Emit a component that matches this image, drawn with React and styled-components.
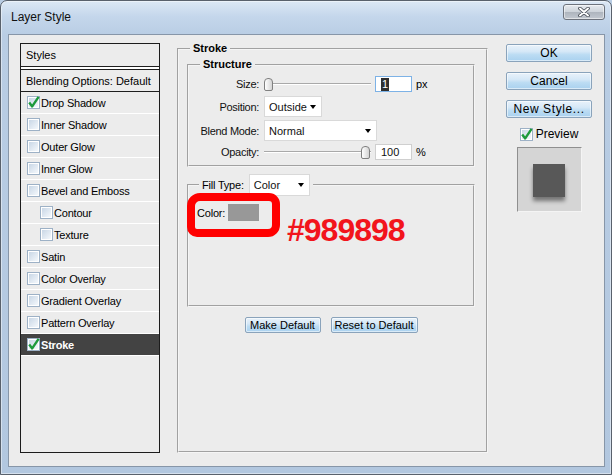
import React, { useId } from 'react';
import styled, { createGlobalStyle } from 'styled-components';

const GlobalStyle = createGlobalStyle`
  html, body { margin: 0; padding: 0; background: #b8cce3; }
  body {
    font-family: "Liberation Sans", Arial, sans-serif;
    font-size: 11px;
    color: #000;
  }
  * { box-sizing: border-box; }
`;

const Window = styled.div`
  width: 612px;
  height: 475px;
  display: flex;
  flex-direction: column;
  border: 1px solid #59616c;
  border-radius: 7px 7px 0 0;
  background: linear-gradient(to bottom, #dce8f5 0px, #c4d6eb 16px, #b9cde4 34px, #b2c7df 100%);
  box-shadow: inset 0 0 0 1px rgba(255, 255, 255, 0.45);
  overflow: hidden;
`;

const TitleBar = styled.div`
  height: 33px;
  flex: none;
  display: flex;
  justify-content: space-between;
  align-items: flex-start;
  padding: 0 6px 0 10px;
`;

const Title = styled.div`
  padding-top: 9px;
  font-size: 12px;
  line-height: 15px;
  color: #111;
`;

const CloseButton = styled.div`
  margin-top: 3px;
  width: 42px;
  height: 16px;
  display: flex;
  align-items: center;
  justify-content: center;
  border: 1px solid #6c727c;
  border-radius: 3px;
  background: linear-gradient(to bottom, #e6eaef 0%, #cdd3da 48%, #aeb5be 52%, #c2c8d0 100%);
  box-shadow: inset 0 0 0 1px rgba(255, 255, 255, 0.5);
`;

const Content = styled.div`
  flex: 1;
  display: flex;
  align-items: flex-start;
  margin: 0 6px 7px 7px;
  padding: 8px 0 0 11px;
  border: 1px solid #8796a8;
  background: #ececec;
`;

/* ---------- left style list ---------- */

const StyleList = styled.div`
  flex: none;
  width: 140px;
  height: 410px;
  border: 1px solid #1c1c1c;
  background: #ececec;
`;

const HeaderRow = styled.div`
  height: 23px;
  display: flex;
  align-items: center;
  padding-left: 5px;
  border-bottom: 1px solid #1e1e1e;
  box-shadow: 0 2px 0 #fff;
`;

const BlendingRow = styled.div`
  height: 23px;
  margin-top: 2px;
  display: flex;
  align-items: center;
  padding-left: 5px;
  border-top: 1px solid #1e1e1e;
  border-bottom: 1px solid #1e1e1e;
`;

const EffectRow = styled.div`
  height: 22px;
  display: flex;
  align-items: center;
  gap: 1px;
  padding-left: ${(p) => (p.$sub ? 19 : 6)}px;
  border-bottom: 1px solid #fff;
  background: ${(p) => (p.$selected ? '#434343' : 'transparent')};
  color: ${(p) => (p.$selected ? '#fff' : '#000')};
  font-weight: ${(p) => (p.$selected ? 'bold' : 'normal')};
  letter-spacing: -0.2px;
`;

/* ---------- middle panel ---------- */

const Group = styled.fieldset`
  margin: 0;
  min-width: 0;
  border: 2px groove #f5f5f5;
  padding: 0;
`;

const StrokeGroup = styled(Group)`
  flex: none;
  width: 311px;
  height: 411px;
  margin: -1px 0 0 17px;
  padding: 3px 11px 0 8px;
  display: flex;
  flex-direction: column;
`;

const StructureGroup = styled(Group)`
  width: 288px;
`;

const FillGroup = styled(Group)`
  width: 288px;
  margin-top: 7px;
`;

const Legend = styled.legend`
  margin-left: ${(p) => p.$offset}px;
  padding: 0 3px;
  font-weight: bold;
  line-height: 13px;
`;

const FillLegend = styled.legend`
  margin-left: 10px;
  padding: 0 3px;
  display: flex;
  align-items: center;
  gap: 5px;
  letter-spacing: -0.2px;
`;

const Fields = styled.div`
  display: flex;
  flex-direction: column;
  gap: 3px;
  padding: 5px 0 5px 0;
`;

const FieldRow = styled.div`
  display: grid;
  grid-template-columns: 70px 1fr;
  column-gap: 5px;
  align-items: center;
  height: ${(p) => p.$h}px;
  margin-top: ${(p) => p.$mt || 0}px;
`;

const Label = styled.span`
  text-align: right;
  letter-spacing: -0.3px;
  color: #111;
`;

const Control = styled.div`
  display: flex;
  align-items: center;
`;

const Slider = styled.div`
  width: 107px;
  height: 14px;
  display: flex;
  align-items: center;
  justify-content: ${(p) => (p.$end ? 'flex-end' : 'flex-start')};
  padding: 0 ${(p) => (p.$end ? 0 : 0)}px;
  background: linear-gradient(
    to bottom,
    transparent 6px,
    #a9a9a9 6px,
    #a9a9a9 7px,
    #ffffff 7px,
    #ffffff 8px,
    transparent 8px
  );
`;

const Thumb = styled.div`
  width: 9px;
  height: 13px;
  margin-right: ${(p) => (p.$end ? 1 : 0)}px;
  border: 1px solid #808080;
  border-radius: 4px 4px 2px 2px;
  background: linear-gradient(to right, #ffffff, #d4d4d4);
`;

const NumberBox = styled.div`
  width: 37px;
  height: 16px;
  margin-left: ${(p) => p.$ml}px;
  display: flex;
  align-items: center;
  padding-left: 5px;
  border: 1px solid ${(p) => (p.$focused ? '#7db2e6' : '#cfcfcf')};
  background: #fff;
  color: #111;
`;

const Selected = styled.span`
  background: #2f2f2f;
  color: #fff;
  padding: 0 1px;
  line-height: 13px;
`;

const Unit = styled.span`
  margin-left: 4px;
`;

const Dropdown = styled.div`
  width: ${(p) => p.$w}px;
  height: ${(p) => p.$h || 21}px;
  display: flex;
  align-items: center;
  justify-content: space-between;
  padding: 0 5px 0 4px;
  border: 1px solid #d9d9d9;
  background: #fff;
  color: #111;
  font-weight: normal;
  letter-spacing: 0;
`;

const Arrow = styled.span`
  width: 0;
  height: 0;
  border-left: 3.5px solid transparent;
  border-right: 3.5px solid transparent;
  border-top: 4px solid #000;
`;

const FillBody = styled.div`
  position: relative;
  height: 109px;
  padding: 8px 0 0 8px;
`;

const ColorRow = styled.div`
  display: flex;
  align-items: center;
  gap: 3px;
  letter-spacing: -0.2px;
`;

const Swatch = styled.div`
  width: 31px;
  height: 17px;
  background: ${(p) => p.$color};
`;

const Highlight = styled.div`
  position: absolute;
  left: -2px;
  top: -3px;
  width: 93px;
  height: 44px;
  border: 8px solid #ff0000;
  border-radius: 13px 11px 12px 10px;
`;

const HexNote = styled.div`
  position: absolute;
  left: 98px;
  top: 18px;
  font-size: 32px;
  line-height: 32px;
  font-weight: bold;
  letter-spacing: -1px;
  color: #f2141c;
`;

const ButtonRow = styled.div`
  display: flex;
  justify-content: center;
  gap: 10px;
  margin-top: 10px;
`;

const DialogButton = styled.div`
  width: ${(p) => p.$w}px;
  height: ${(p) => p.$h}px;
  display: flex;
  align-items: center;
  justify-content: center;
  border: 1px solid #8aa3bb;
  border-radius: 2px;
  background: linear-gradient(to bottom, #e9f2fa 0%, #d6e8f7 40%, #bcdcf3 60%, #a9d1ef 100%);
  box-shadow: inset 0 0 0 1px rgba(255, 255, 255, 0.55);
  font-size: ${(p) => p.$fs || 11}px;
  letter-spacing: ${(p) => p.$ls || 0}px;
  color: #000;
`;

/* ---------- right column ---------- */

const SideColumn = styled.div`
  flex: none;
  width: 86px;
  margin: 1px 0 0 18px;
  display: flex;
  flex-direction: column;
  align-items: center;
  gap: 10px;
`;

const PreviewToggle = styled.div`
  display: flex;
  align-items: center;
  gap: 3px;
  height: 12px;
  font-size: 12px;
`;

const PreviewBox = styled.div`
  margin-top: -3px;
  width: 65px;
  height: 65px;
  display: flex;
  align-items: center;
  justify-content: center;
  background: #d5d5d5;
  border-top: 1px solid #8f8f8f;
  border-left: 1px solid #8f8f8f;
  border-right: 1px solid #f4f4f4;
  border-bottom: 1px solid #f4f4f4;
`;

const PreviewSquare = styled.div`
  width: 32px;
  height: 33px;
  margin-top: 1px;
  background: #585858;
  box-shadow: 0 4px 4px rgba(0, 0, 0, 0.45);
`;

function CheckBox({ checked }) {
  const id = useId();
  return (
    <svg width="13" height="13" viewBox="0 0 13 13" style={{ flex: 'none', overflow: 'visible' }}>
      <defs>
        <linearGradient id={id} x1="0" y1="0" x2="1" y2="1">
          <stop offset="0" stopColor="#c9d7e6" />
          <stop offset="1" stopColor="#f4f8fc" />
        </linearGradient>
      </defs>
      <rect x="0.5" y="0.5" width="12" height="12" fill="#fff" stroke="#9db1c6" />
      <rect x="2" y="2" width="9" height="9" fill={`url(#${id})`} />
      {checked && (
        <path d="M2.2 6.6 L5.2 10.4 L11.6 0.8" fill="none" stroke="#1d9a3c" strokeWidth="2.4" strokeLinejoin="round" />
      )}
    </svg>
  );
}

const effects = [
  { name: 'Drop Shadow', checked: true },
  { name: 'Inner Shadow' },
  { name: 'Outer Glow' },
  { name: 'Inner Glow' },
  { name: 'Bevel and Emboss' },
  { name: 'Contour', sub: true },
  { name: 'Texture', sub: true },
  { name: 'Satin' },
  { name: 'Color Overlay' },
  { name: 'Gradient Overlay' },
  { name: 'Pattern Overlay' },
  { name: 'Stroke', checked: true, selected: true },
];

export default function App() {
  return (
    <>
      <GlobalStyle />
      <Window>
        <TitleBar>
          <Title>Layer Style</Title>
          <CloseButton>
            <svg width="12" height="10" viewBox="0 0 12 10">
              <path d="M2 1.5 L10 8.5 M10 1.5 L2 8.5" stroke="#3f454e" strokeWidth="3.6" strokeLinecap="round" />
              <path d="M2 1.5 L10 8.5 M10 1.5 L2 8.5" stroke="#ffffff" strokeWidth="2" strokeLinecap="round" />
            </svg>
          </CloseButton>
        </TitleBar>

        <Content>
          <StyleList>
            <HeaderRow>Styles</HeaderRow>
            <BlendingRow>Blending Options: Default</BlendingRow>
            {effects.map((fx) => (
              <EffectRow key={fx.name} $sub={fx.sub} $selected={fx.selected}>
                <CheckBox checked={fx.checked} />
                <span>{fx.name}</span>
              </EffectRow>
            ))}
          </StyleList>

          <StrokeGroup>
            <Legend $offset={3}>Stroke</Legend>

            <StructureGroup>
              <Legend $offset={11}>Structure</Legend>
              <Fields>
                <FieldRow $h={16}>
                  <Label>Size:</Label>
                  <Control>
                    <Slider>
                      <Thumb />
                    </Slider>
                    <NumberBox $focused $ml={4}>
                      <Selected>1</Selected>
                    </NumberBox>
                    <Unit>px</Unit>
                  </Control>
                </FieldRow>
                <FieldRow $h={21} $mt={1}>
                  <Label>Position:</Label>
                  <Control>
                    <Dropdown $w={58}>
                      Outside <Arrow />
                    </Dropdown>
                  </Control>
                </FieldRow>
                <FieldRow $h={21}>
                  <Label>Blend Mode:</Label>
                  <Control>
                    <Dropdown $w={113}>
                      Normal <Arrow />
                    </Dropdown>
                  </Control>
                </FieldRow>
                <FieldRow $h={16}>
                  <Label>Opacity:</Label>
                  <Control>
                    <Slider $end>
                      <Thumb $end />
                    </Slider>
                    <NumberBox $ml={4}>100</NumberBox>
                    <Unit>%</Unit>
                  </Control>
                </FieldRow>
              </Fields>
            </StructureGroup>

            <FillGroup>
              <FillLegend>
                <span>Fill Type:</span>
                <Dropdown $w={61} $h={22}>
                  Color <Arrow />
                </Dropdown>
              </FillLegend>
              <FillBody>
                <ColorRow>
                  <span>Color:</span>
                  <Swatch $color="#989898" />
                </ColorRow>
                <Highlight />
                <HexNote>#989898</HexNote>
              </FillBody>
            </FillGroup>

            <ButtonRow>
              <DialogButton $w={76} $h={16}>Make Default</DialogButton>
              <DialogButton $w={87} $h={16}>Reset to Default</DialogButton>
            </ButtonRow>
          </StrokeGroup>

          <SideColumn>
            <DialogButton $w={86} $h={18} $fs={12}>OK</DialogButton>
            <DialogButton $w={86} $h={18} $fs={12}>Cancel</DialogButton>
            <DialogButton $w={86} $h={18} $fs={12} $ls={0.6}>New Style...</DialogButton>
            <PreviewToggle>
              <CheckBox checked />
              <span>Preview</span>
            </PreviewToggle>
            <PreviewBox>
              <PreviewSquare />
            </PreviewBox>
          </SideColumn>
        </Content>
      </Window>
    </>
  );
}
